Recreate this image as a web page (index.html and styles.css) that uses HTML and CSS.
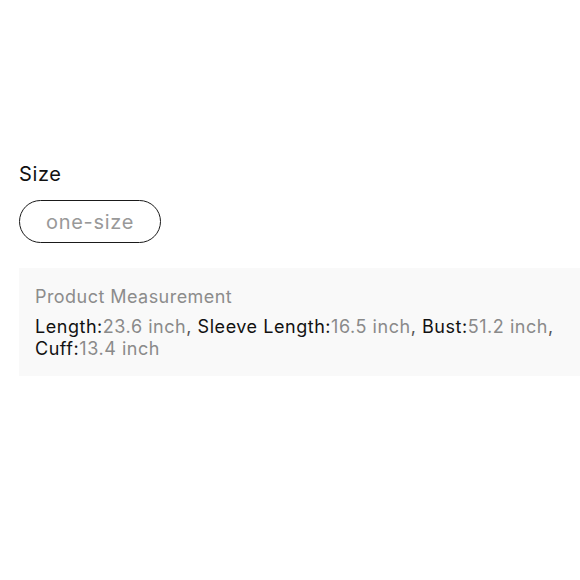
FILE: index.html
```html
<!DOCTYPE html>
<html>
<head>
<meta charset="utf-8">
<link rel="stylesheet" href="styles.css">
</head>
<body>
<div class="page">
  <div class="size-title">Size</div>
  <div class="options">
    <div class="pill">one-size</div>
  </div>
  <div class="measure">
    <div class="measure-title">Product Measurement</div>
    <div class="measure-body"><span class="k">Length:</span><span class="v">23.6 inch</span>, <span class="k">Sleeve Length:</span><span class="v">16.5 inch</span>, <span class="k">Bust:</span><span class="v">51.2 inch</span>, <span class="k">Cuff:</span><span class="v">13.4 inch</span></div>
  </div>
</div>
</body>
</html>
```

FILE: styles.css
```css
html, body {
  margin: 0;
  padding: 0;
  background: #ffffff;
}
body {
  font-family: Inter, "Liberation Sans", Arial, sans-serif;
  color: #111;
}
.page {
  padding: 162px 0 0 19px;
}
.size-title {
  font-size: 20px;
  line-height: 24px;
  letter-spacing: 0.6px;
  color: #111;
}
.options {
  display: flex;
  margin-top: 14px;
}
.pill {
  height: 41px;
  width: 140px;
  box-sizing: content-box;
  border: 1.5px solid #1a1a1a;
  border-radius: 23px;
  display: flex;
  align-items: center;
  justify-content: center;
  font-size: 20px;
  letter-spacing: 0.7px;
  color: #999;
}
.measure {
  margin-top: 25px;
  background: #f9f9f9;
  padding: 18px 16px 16px 16px;
}
.measure-title {
  font-size: 18px;
  line-height: 22px;
  letter-spacing: 0.45px;
  color: #8c8c8c;
}
.measure-body {
  margin-top: 8px;
  font-size: 18px;
  line-height: 22px;
  letter-spacing: 0.54px;
  color: #555;
}
.k {
  color: #111;
}
.v {
  color: #8a8a8a;
}
```
